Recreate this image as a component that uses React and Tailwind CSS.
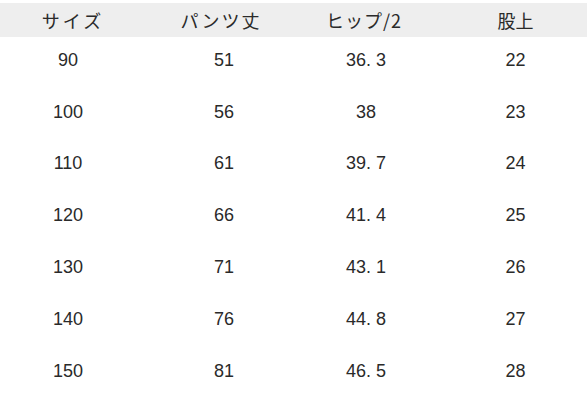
import React from "react";

const rows = [
  ["90", "51", "36. 3", "22"],
  ["100", "56", "38", "23"],
  ["110", "61", "39. 7", "24"],
  ["120", "66", "41. 4", "25"],
  ["130", "71", "43. 1", "26"],
  ["140", "76", "44. 8", "27"],
  ["150", "81", "46. 5", "28"],
];

const grid = "grid grid-cols-[140px_166px_120px_1fr]";

export default function App() {
  return (
    <div
      className="w-[587px] h-[400px] bg-white overflow-hidden pt-[3px] text-[#2a2a2a]"
      style={{ fontFamily: '"Liberation Sans", "Noto Sans CJK JP", sans-serif' }}
    >
      <div className={`${grid} h-[34px] items-center bg-[#eeeeee] text-[18px]`}>
        <div className="text-center tracking-[3px] pl-[6px]" style={{ fontFamily: '"Noto Sans CJK JP", sans-serif' }}>サイズ</div>
        <div className="text-center tracking-[2px] pr-[4px]" style={{ fontFamily: '"Noto Sans CJK JP", sans-serif' }}>パンツ丈</div>
        <div className="text-center tracking-[1px] pr-[4px]" style={{ fontFamily: '"Noto Sans CJK JP", sans-serif' }}>ヒップ/2</div>
        <div className="text-center pl-[18px]" style={{ fontFamily: '"Noto Sans CJK JP", sans-serif' }}>股上</div>
      </div>
      {rows.map((r, i) => (
        <div key={i} className={`${grid} h-[51.8px] items-center pb-[5px] text-[18px]`}>
          <div className="text-center pr-[4px]">{r[0]}</div>
          <div className="text-center pl-[2px]">{r[1]}</div>
          <div className="text-center">{r[2]}</div>
          <div className="text-center pl-[18px]">{r[3]}</div>
        </div>
      ))}
    </div>
  );
}
